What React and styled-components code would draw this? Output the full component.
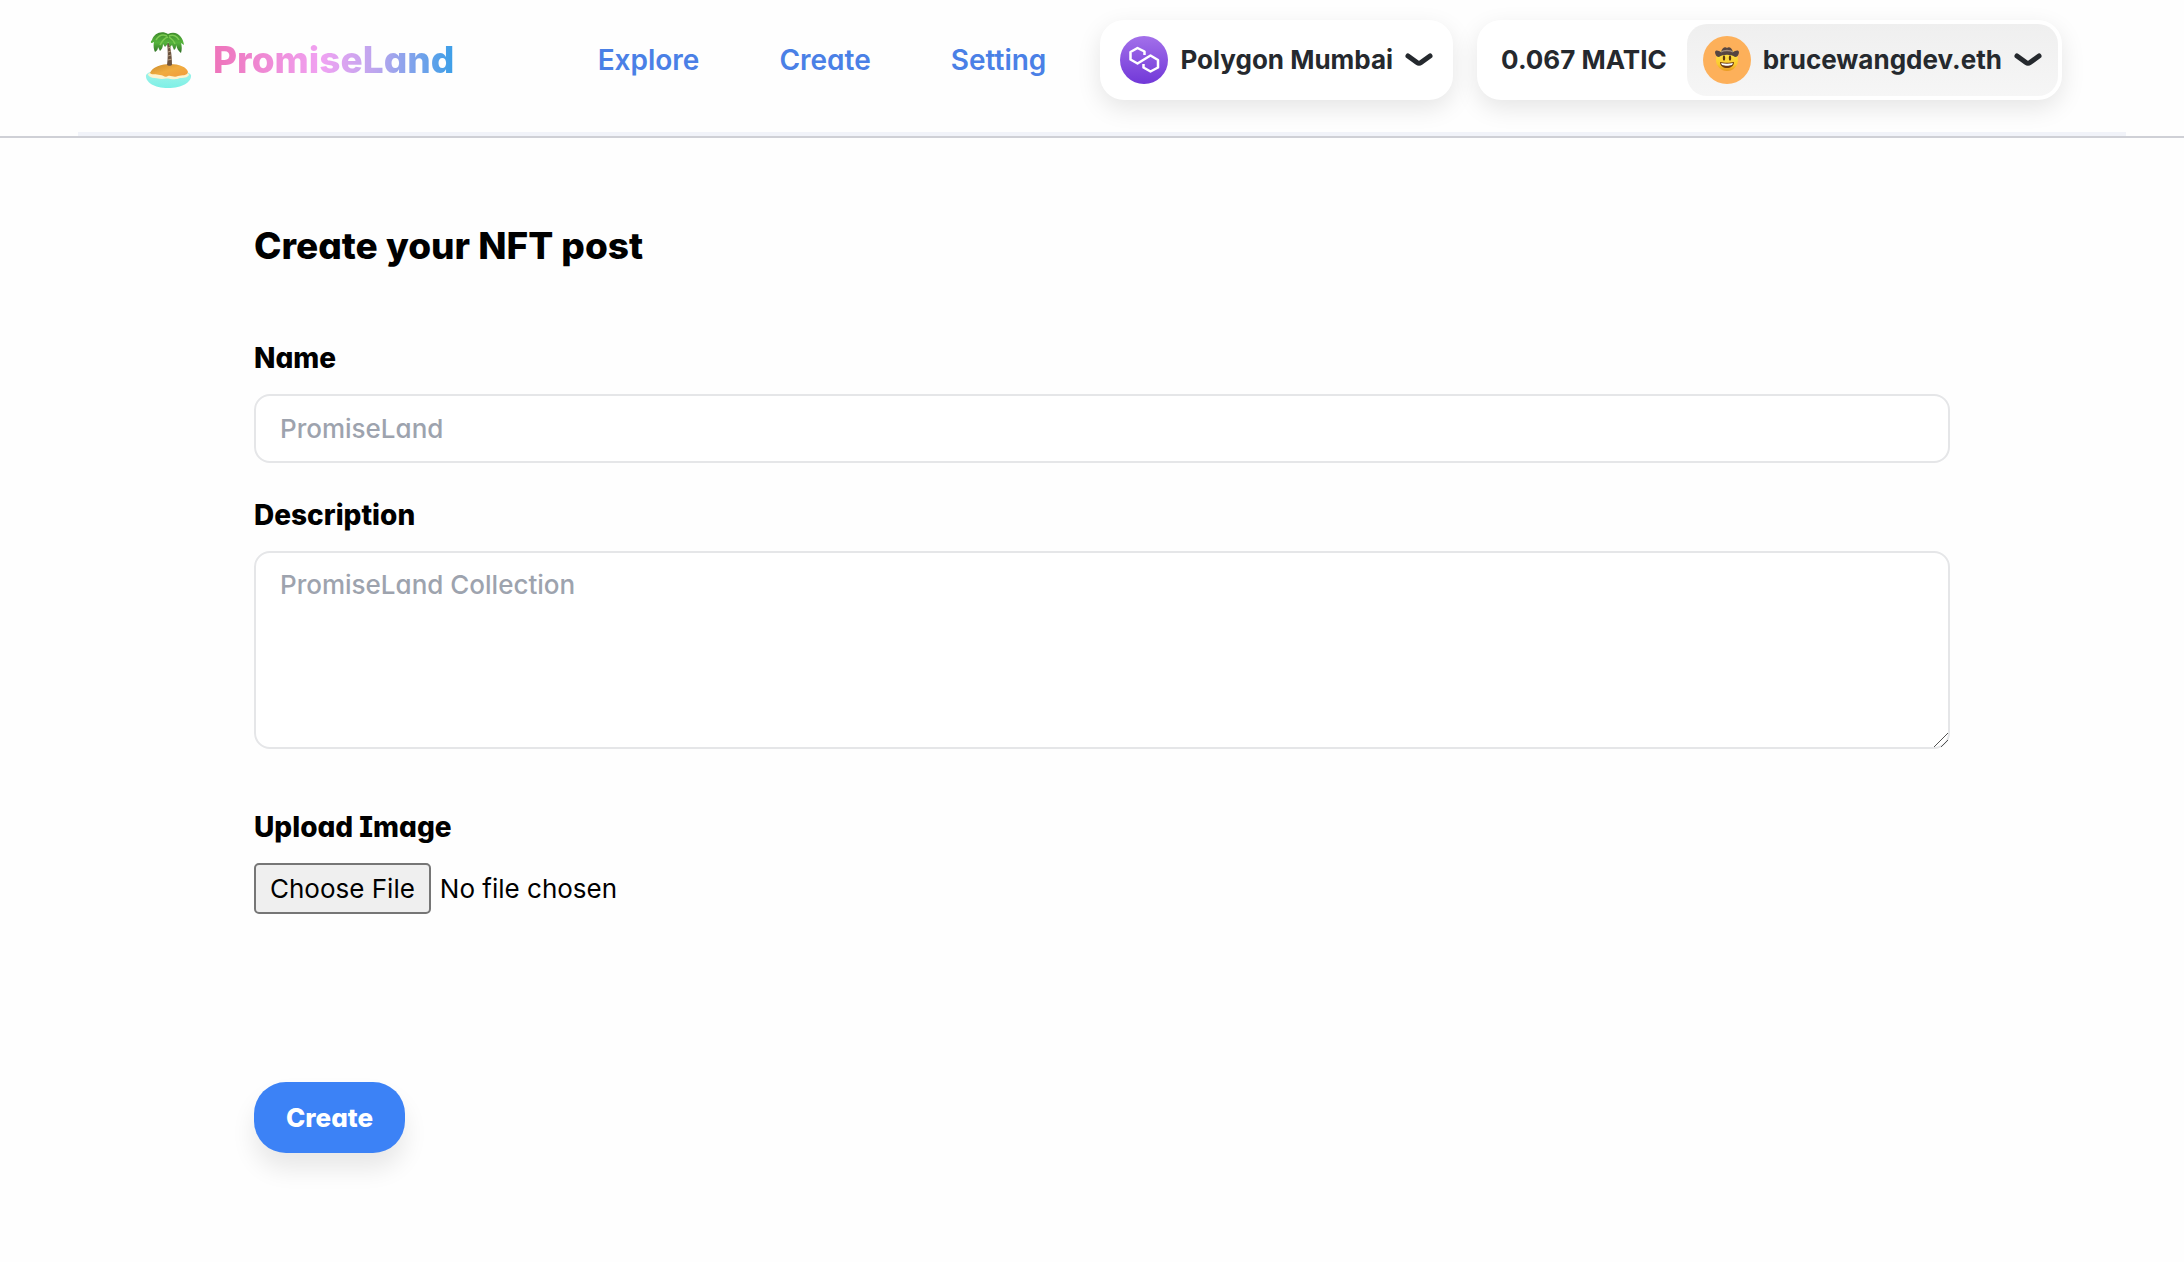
import React from 'react';
import styled, { createGlobalStyle, css } from 'styled-components';

const GlobalStyle = createGlobalStyle`
  *, *::before, *::after { box-sizing: border-box; }
  body {
    margin: 0;
    background: #fefefe;
    color: #000;
    font-family: Inter, 'Open Sans', sans-serif;
    font-feature-settings: 'cv11', 'cv08';
  }
  button, input, textarea { font-family: inherit; font-feature-settings: inherit; }
`;

const Header = styled.header`
  border-bottom: 2px solid #cfd0d6;
`;

const Bar = styled.div`
  display: flex;
  align-items: flex-start;
  height: 136px;
  margin: 0 58px 0 78px;
  padding: 20px 64px 0 66px;
  border-bottom: 4px solid #f1f3f9;
`;

const Brand = styled.a`
  display: flex;
  align-items: center;
  gap: 21px;
  height: 80px;
  text-decoration: none;
`;

const BrandName = styled.span`
  font-size: 37px;
  line-height: 48px;
  font-weight: 800;
  color: transparent;
  background: linear-gradient(90deg, #ee74ba 0%, #f0a2f2 45%, #bba6ee 68%, #3b9fe8 100%);
  background-clip: text;
`;

const Nav = styled.nav`
  display: flex;
  align-items: center;
  gap: 80px;
  height: 80px;
  margin: 0 54px 0 auto;
`;

const NavLink = styled.a`
  font-size: 28px;
  line-height: 36px;
  font-weight: 600;
  color: #4a80e6;
  text-decoration: none;
`;

const Wallet = styled.div`
  display: flex;
  gap: 24px;
  font-feature-settings: normal;
`;

const pill = css`
  display: flex;
  align-items: center;
  height: 80px;
  border: 0;
  border-radius: 24px;
  background: #fff;
  box-shadow: 0 8px 24px rgba(0, 0, 0, 0.1);
  color: #25292e;
  font-size: 26px;
  line-height: 32px;
  font-weight: 700;
  white-space: nowrap;
`;

const ChainButton = styled.button`
  ${pill}
  gap: 12px;
  padding: 0 20px;
`;

const Account = styled.div`
  ${pill}
  padding: 4px;
`;

const Balance = styled.span`
  padding: 0 20px;
`;

const AccountButton = styled.button`
  ${pill}
  height: 72px;
  gap: 12px;
  padding: 0 16px;
  border-radius: 20px;
  background: linear-gradient(#efefef, #f6f6f6);
  box-shadow: none;
`;

const Main = styled.main`
  padding: 84px 234px 80px 254px;
`;

const Title = styled.h1`
  margin: 0 0 70px;
  font-size: 37px;
  line-height: 48px;
  font-weight: 800;
`;

const Field = styled.div`
  display: flex;
  flex-direction: column;
  align-items: flex-start;
  gap: 18px;
  margin-bottom: ${(p) => p.$space}px;
`;

const Label = styled.label`
  font-size: 28px;
  line-height: 36px;
  font-weight: 800;
`;

const box = css`
  display: block;
  width: 100%;
  padding: 14px 24px;
  border: 2px solid #e5e6e8;
  border-radius: 16px;
  background: #fff;
  font-size: 26px;
  line-height: 36px;
  font-weight: 500;
  color: #000;
  &::placeholder { color: #9da3ae; opacity: 1; }
`;

const TextInput = styled.input`
  ${box}
  height: 69px;
`;

const TextArea = styled.textarea`
  ${box}
  height: 198px;
  resize: vertical;
  &::-webkit-scrollbar { width: 18px; height: 18px; }
  &::-webkit-resizer {
    background: linear-gradient(
      135deg,
      transparent 47%, #555 47%, #555 53%, transparent 53%,
      transparent 72%, #555 72%, #555 78%, transparent 78%
    ) center / 14px 14px no-repeat;
  }
`;

const FileInput = styled.input`
  font-size: 26px;
  line-height: 34px;
  color: #000;
  &::file-selector-button {
    height: 51px;
    margin: 0 9px 0 0;
    padding: 0 14px;
    border: 2px solid #767676;
    border-radius: 5px;
    background: #efefef;
    color: #000;
    font: inherit;
  }
`;

const Submit = styled.button`
  height: 71px;
  padding: 0 32px;
  border: 0;
  border-radius: 32px;
  background: #3c82f6;
  box-shadow: 0 16px 24px rgba(0, 0, 0, 0.09);
  color: #fff;
  font-size: 26px;
  line-height: 36px;
  font-weight: 800;
`;

function Island() {
  return (
    <svg width="48" height="58" viewBox="0 0 48 58" aria-hidden="true">
      <defs>
        <linearGradient id="sea" x1="0" y1="0" x2="0" y2="1">
          <stop offset="0" stopColor="#a5f3ea" />
          <stop offset="1" stopColor="#7df0e6" />
        </linearGradient>
        <linearGradient id="sand" x1="0" y1="0" x2="1" y2="1">
          <stop offset="0" stopColor="#c98a2c" />
          <stop offset="0.5" stopColor="#f0ac40" />
          <stop offset="1" stopColor="#f29a3c" />
        </linearGradient>
        <linearGradient id="leaf" x1="0" y1="0" x2="0" y2="1">
          <stop offset="0" stopColor="#3f8a2c" />
          <stop offset="0.5" stopColor="#55b43c" />
          <stop offset="1" stopColor="#2f6e26" />
        </linearGradient>
      </defs>
      <path d="M2 44c2-4 12-5 22-5s21 1 23 5c1 7-9 13-23 13S1 51 2 44z" fill="url(#sea)" />
      <path d="M4 43c6-4 34-4 41 0 0 3-4 4-9 4-6 3-12-1-18 1-7-1-14-1-14-5z" fill="#fdf3cf" />
      <path d="M6 42c2-6 12-9 20-9 9 0 17 3 18 8-1 4-6 3-10 4-4 2-7-1-10 0-3 2-5-1-8-1-4-1-9 0-10-2z" fill="url(#sand)" />
      <path d="M23 12c1 7 1 15 0 22 1 1 4 1 5 0 0-8-1-16-3-22z" fill="#6c5340" />
      <path d="M24 17l3-1M24 21l3-1M24 25l3-1M24 29l4-1" stroke="#b39a7c" strokeWidth="1" />
      <path d="M24 3C18-1 10 2 8 9c-1 1-2 3 0 3l2-1c-1 4 0 8 1 10 2-1 3-3 3-5l2 4c2-2 3-4 3-7l2 3c1-1 3-3 3-5l2 5 2-2 2 5c2-1 2-3 2-5 1 3 2 6 5 8 1-3 1-7 0-10l3 2C39 6 33-1 24 3z" fill="url(#leaf)" />
      <path d="M23 5c-4-2-8-1-11 4m12-3c-4 1-6 4-8 8M25 5c4-2 8 0 10 4m-10-3c3 2 5 4 6 7" fill="none" stroke="#7ccb52" strokeWidth="1.500" />
    </svg>
  );
}

function PolygonLogo() {
  return (
    <svg width="48" height="48" viewBox="0 0 48 48" aria-hidden="true">
      <defs>
        <linearGradient id="polygon" x1="0" y1="0" x2="0" y2="1">
          <stop offset="0" stopColor="#a370ea" />
          <stop offset="1" stopColor="#7138d8" />
        </linearGradient>
      </defs>
      <circle cx="24" cy="24" r="24" fill="url(#polygon)" />
      <path
        d="M24.500 19v-3.500l-7-3.500-7 4v7.500l7 4 13-8 7.500 4.500v7.500l-7.500 4-7-4v-3.500"
        fill="none" stroke="#fff" strokeWidth="2.500" strokeLinejoin="round"
      />
    </svg>
  );
}

function Avatar() {
  return (
    <svg width="48" height="48" viewBox="0 0 48 48" aria-hidden="true">
      <defs>
        <linearGradient id="face" x1="0" y1="0" x2="0" y2="1">
          <stop offset="0" stopColor="#ffe94e" />
          <stop offset="0.7" stopColor="#fbcb2c" />
          <stop offset="1" stopColor="#e99a22" />
        </linearGradient>
      </defs>
      <circle cx="24" cy="24" r="24" fill="#fdb05a" />
      <circle cx="24" cy="24" r="11" fill="url(#face)" />
      <path d="M12 16c1-3 4-1 6 0 1-4 4-6 6-4 2-2 5 0 6 4 2-1 5-3 6 0 0 3-2 5-4 5-4-3-12-3-16 0-2 0-4-2-4-5z" fill="#564541" />
      <path d="M18 16c3-2 9-2 12 0" fill="none" stroke="#a28c7c" strokeWidth="1.500" />
      <ellipse cx="21" cy="22" rx="1.200" ry="2.800" fill="#5d3710" />
      <ellipse cx="27" cy="22" rx="1.200" ry="2.800" fill="#5d3710" />
      <path d="M17 26c4 1 10 1 14 0 0 8-14 8-14 0z" fill="#6b3b12" />
      <path d="M18 27c4 1 8 1 12 0l-1 2c-4 1-6 1-10 0z" fill="#fff" />
    </svg>
  );
}

function Chevron() {
  return (
    <svg width="28" height="14" viewBox="0 0 28 14" aria-hidden="true">
      <path d="M3 3l9 6.500q2 1.500 4 0L25 3" fill="none" stroke="#25292e" strokeWidth="5" strokeLinecap="round" />
    </svg>
  );
}

export default function App() {
  return (
    <>
      <GlobalStyle />
      <Header>
        <Bar>
          <Brand href="#">
            <Island />
            <BrandName>PromiseLand</BrandName>
          </Brand>
          <Nav>
            <NavLink href="#explore">Explore</NavLink>
            <NavLink href="#create">Create</NavLink>
            <NavLink href="#setting">Setting</NavLink>
          </Nav>
          <Wallet>
            <ChainButton type="button">
              <PolygonLogo />
              Polygon Mumbai
              <Chevron />
            </ChainButton>
            <Account>
              <Balance>0.067 MATIC</Balance>
              <AccountButton type="button">
                <Avatar />
                brucewangdev.eth
                <Chevron />
              </AccountButton>
            </Account>
          </Wallet>
        </Bar>
      </Header>
      <Main>
        <Title>Create your NFT post</Title>
        <form onSubmit={(e) => e.preventDefault()}>
          <Field $space={34}>
            <Label htmlFor="name">Name</Label>
            <TextInput id="name" type="text" placeholder="PromiseLand" />
          </Field>
          <Field $space={60}>
            <Label htmlFor="description">Description</Label>
            <TextArea id="description" placeholder="PromiseLand Collection" />
          </Field>
          <Field $space={168}>
            <Label htmlFor="image">Upload Image</Label>
            <FileInput id="image" type="file" />
          </Field>
          <Submit type="submit">Create</Submit>
        </form>
      </Main>
    </>
  );
}
